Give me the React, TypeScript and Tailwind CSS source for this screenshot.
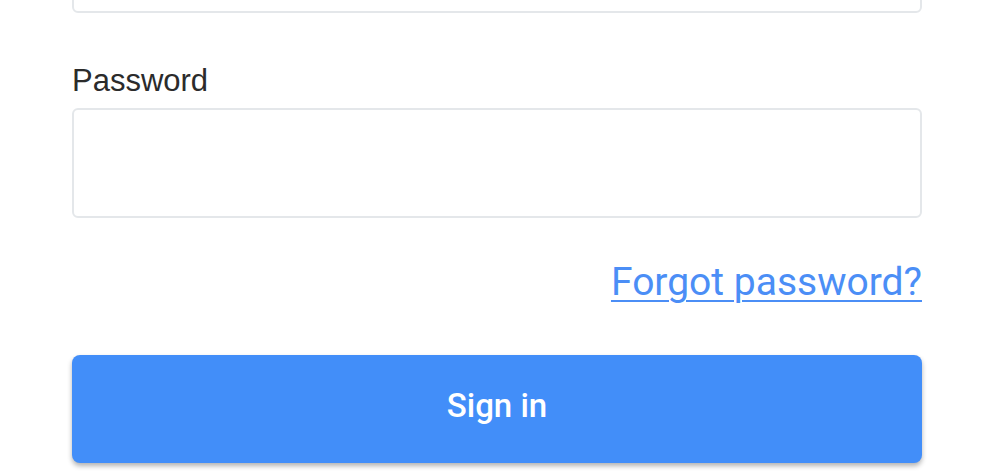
import React from "react";

export default function App() {
  return (
    <div className="w-[991px] h-[472px] bg-white overflow-hidden">
      <div className="ml-[72px] w-[850px] flex flex-col">
        <div className="mt-[-97px] h-[110px] rounded-[6px] border-2 border-[#e4e7ea] bg-white" />
        <label
          className="mt-[45px] h-[46px] text-[31px] leading-[46px] text-[#2b2b2b]"
          style={{ fontFamily: '"Liberation Sans", Arial, sans-serif' }}
        >
          Password
        </label>
        <input
          type="password"
          className="mt-[4px] h-[110px] rounded-[6px] border-2 border-[#e4e7ea] bg-white outline-none"
        />
        <div className="mt-[42px] flex justify-end">
          <a
            href="#"
            className="text-[39px] leading-[44px] text-[#4b8ef6] underline decoration-2 underline-offset-[5px]"
            style={{ fontFamily: 'Roboto, "Noto Sans", sans-serif' }}
          >
            Forgot password?
          </a>
        </div>
        <button
          className="mt-[51px] h-[108px] pb-[6px] rounded-[8px] bg-[#428ef9] text-white text-[33px] font-medium shadow-[0_3px_5px_rgba(0,0,0,0.3)]"
          style={{ fontFamily: 'Roboto, "Noto Sans", sans-serif' }}
        >
          Sign in
        </button>
      </div>
    </div>
  );
}
